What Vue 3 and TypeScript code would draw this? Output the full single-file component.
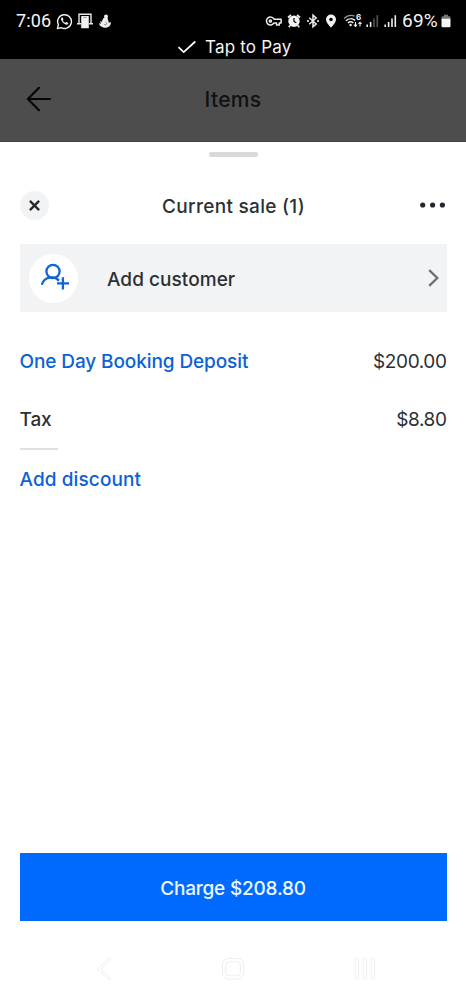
<script setup lang="ts">
interface SaleLine {
  label: string
  amount: string
  kind: 'item' | 'tax'
}

const lines: SaleLine[] = [
  { label: 'One Day Booking Deposit', amount: '$200.00', kind: 'item' },
  { label: 'Tax', amount: '$8.80', kind: 'tax' },
]
const total = '$208.80'
</script>

<template>
  <div class="screen">
    <header class="status">
      <div class="status-row">
        <span class="time">7:06</span>
        <svg class="whatsapp" width="17" height="17" viewBox="0 0 17 17" fill="none">
          <path d="M1.4 15.6l1-3.8A6.9 6.9 0 1 1 5.1 14.6z" stroke="#f2f2f2" stroke-width="1.4" stroke-linejoin="round" />
          <path d="M5.7 4.6c-1.3 1.1-.6 3 1.2 5 2 2 4 2.8 5.1 1.4.5-.7.4-1-.2-1.3l-1.2-.6c-.5-.2-.7.8-1.2.7-1-.3-2.2-1.5-2.5-2.4-.1-.4.7-.7.5-1.2l-.5-1.3c-.2-.5-.8-.6-1.2-.3z" fill="#f2f2f2" />
        </svg>
        <svg class="device" width="16" height="16" viewBox="0 0 16 16" fill="none">
          <path d="M2 10V1.3h12V10" stroke="#e8e8e8" stroke-width="1.4" />
          <path d="M0 10.8h4M12 10.8h4" stroke="#e8e8e8" stroke-width="1.6" />
          <rect x="4.2" y="3" width="7.6" height="12.3" rx=".6" fill="#f2f2f2" />
          <path d="M6.5 4.4h3" stroke="#777" stroke-width=".8" />
        </svg>
        <svg class="figure" width="12" height="15" viewBox="0 0 12 15">
          <circle cx="7" cy="2.6" r="2" fill="#eee" />
          <path d="M5.8 3.8l3 .2c-.4 1.8.8 2.6 1 4.7l1.9-.6c.7 2.5-1.7 5.6-4.7 5.6C3.3 13.7.2 12 .1 9.2l1.9.6-.9-2.6 2 .5c-.2-1.3.2-1.9 1-2.4-.4-.7 0-1.2 1.7-1.5z" fill="#eee" />
          <path d="M6.5 8.2l1.6 1-1.4 1.9-1.8-.8" fill="none" stroke="#555" stroke-width=".6" />
        </svg>
        <div class="indicators">
          <svg class="key" width="17" height="16" viewBox="0 0 17 16" fill="none" stroke="#eee" stroke-width="1.5">
            <path d="M9 6.2a4 4 0 1 0 0 3.7h2.5v2h2.8v-2h1.8V6.2z" stroke-linejoin="round" />
            <circle cx="5.4" cy="8" r="1.1" />
          </svg>
          <svg class="alarm" width="14" height="16" viewBox="0 0 14 16">
            <path d="M1 4.5L4 2M13 4.5L10 2M3 12.5l-1.2 1.6M11 12.5l1.2 1.6" stroke="#eee" stroke-width="1.8" />
            <circle cx="7" cy="8.3" r="5.7" fill="#f2f2f2" />
            <path d="M7 5v3.5l2.3 1.2" fill="none" stroke="#000" stroke-width="1.2" />
          </svg>
          <svg class="bluetooth" width="14" height="16" viewBox="0 0 14 16">
            <path d="M3.2 4.8l7 6.2L7 13.8V2.2L10.2 5l-7 6.2" fill="none" stroke="#eee" stroke-width="1.5" />
            <circle cx="2" cy="8" r="1.1" fill="#eee" /><circle cx="12" cy="8" r="1.1" fill="#eee" />
          </svg>
          <svg class="pin" width="12" height="16" viewBox="0 0 12 16">
            <path fill-rule="evenodd" d="M6 1.5a5 5 0 0 0-5 5C1 9.700 6 14.700 6 14.700s5-5 5-8.200A5 5 0 0 0 6 1.500zm0 3.200a1.800 1.800 0 1 1 0 3.600 1.800 1.800 0 0 1 0-3.600z" fill="#f2f2f2" />
          </svg>
          <span class="wifi">
            <svg width="20" height="16" viewBox="0 0 20 16" fill="none">
              <path d="M1 5.5C4.2 2.3 8.2 1.9 11.5 3.2" stroke="#999" stroke-width="1.3" />
              <path d="M2.9 7.7c2.7-2.4 6.5-2.5 9.2-.3M4.9 10c1.6-1.4 3.8-1.4 5.4 0" stroke="#eee" stroke-width="1.4" />
              <circle cx="7.6" cy="12" r="1.2" fill="#eee" />
              <path d="M12.5 9v4M10.9 11.7l1.6 1.7 1.6-1.7M17 13.5v-4M15.4 10.8L17 9.2l1.6 1.6" stroke="#eee" stroke-width="1.1" />
            </svg>
            <span class="wifi-gen">6</span>
          </span>
          <svg class="signal" width="13" height="16" viewBox="0 0 13 16" stroke-width="1.6">
            <path d="M1.2 11.5V14M4.6 9v5" stroke="#eee" />
            <path d="M8 5.5V14M11.3 2.2V14" stroke="#555" />
          </svg>
          <svg class="signal second" width="13" height="16" viewBox="0 0 13 16" stroke-width="1.6">
            <path d="M1.2 11.5V14M4.6 9v5M8 5.5V14M11.3 2.2V14" stroke="#eee" />
          </svg>
          <span class="percent">69%</span>
          <svg class="battery" width="10" height="16" viewBox="0 0 10 16">
            <path d="M3 1.7h4v1.5h1.2q1.3 0 1.3 1.3V6H.5V4.5q0-1.3 1.3-1.3H3z" fill="#777" />
            <path d="M.5 5.8h9V13q0 1.300-1.300 1.300H1.800Q.5 14.300.5 13z" fill="#f5f5f5" />
          </svg>
        </div>
      </div>
      <div class="tap">
        <svg width="20" height="14" viewBox="0 0 20 14"><path d="M1.5 7.2l5.2 4.9L18.3 1.5" fill="none" stroke="#fff" stroke-width="1.7" /></svg>
        <span>Tap to Pay</span>
      </div>
    </header>

    <div class="backdrop">
      <svg class="back" width="26" height="26" viewBox="0 0 26 26" fill="none" stroke="#060606" stroke-width="2.2" stroke-linecap="round" stroke-linejoin="round">
        <path d="M24 13H1.8M13 1.8L1.8 13 13 24.2" />
      </svg>
      <h1>Items</h1>
      <span></span>
    </div>

    <main class="sheet">
      <div class="handle"></div>
      <div class="sheet-head">
        <button class="close" aria-label="Close">
          <svg width="11" height="11" viewBox="0 0 10 10"><path d="M.8.8l8.4 8.4M9.2.8L.8 9.2" stroke="#23292e" stroke-width="2.1" /></svg>
        </button>
        <h2>Current sale (1)</h2>
        <svg class="more" width="26" height="6" viewBox="0 0 26 6" fill="#23292e">
          <circle cx="2.7" cy="3" r="2.6" /><circle cx="12.6" cy="3" r="2.6" /><circle cx="22.4" cy="3" r="2.6" />
        </svg>
      </div>

      <button class="customer">
        <span class="avatar">
          <svg width="30" height="30" viewBox="0 0 30 30" fill="none" stroke="#0f62d8" stroke-width="2.3">
            <circle cx="14" cy="8.4" r="6.6" />
            <path d="M2.8 21.8C5 13.6 15 12.4 20 17.6M18 20.300h12M23.900 14.300v12.200" />
          </svg>
        </span>
        <span class="customer-label">Add customer</span>
        <svg class="chevron" width="11" height="18" viewBox="0 0 11 18"><path d="M1.2 1.2L9.3 9l-8.100 7.800" fill="none" stroke="#6c6f73" stroke-width="2.3" /></svg>
      </button>

      <div class="lines">
        <div v-for="line in lines" :key="line.label" class="line" :class="line.kind">
          <span class="label">{{ line.label }}</span>
          <span class="amount">{{ line.amount }}</span>
        </div>
      </div>
      <div class="rule"></div>
      <a class="discount">Add discount</a>
      <button class="charge">Charge {{ total }}</button>

      <nav class="nav">
        <svg width="16" height="24" viewBox="0 0 16 24"><path d="M13 1L1.5 12 13 23l1.5-1.6L5 12l9.5-9.4z" /></svg>
        <svg width="24" height="24" viewBox="0 0 24 24"><rect x="1.5" y="1.5" width="21" height="20.5" rx="6" /><rect x="4.7" y="4.7" width="14.6" height="14.1" rx="3.5" /></svg>
        <svg width="22" height="24" viewBox="0 0 22 24"><rect x="1" y="1.5" width="3.5" height="20.5" rx="1" /><rect x="9" y="1.5" width="3.5" height="20.5" rx="1" /><rect x="17" y="1.5" width="3.5" height="20.5" rx="1" /></svg>
      </nav>
    </main>
  </div>
</template>

<style>
body { margin: 0; background: #fff; }
</style>

<style scoped>
.screen {
  width: 466px;
  height: 999px;
  display: flex;
  flex-direction: column;
  overflow: hidden;
  font-family: Inter, "Liberation Sans", sans-serif;
  color: #2b3035;
  background: #fff;
}
svg { display: block; flex: none; }
button { border: 0; padding: 0; font: inherit; color: inherit; }
h1, h2 { margin: 0; font-size: 19px; font-weight: 500; line-height: 24px; white-space: nowrap; }
.status { height: 59px; flex: none; background: #000; color: #f5f5f5; }
.status-row { height: 16px; padding: 13px 15px 0 16px; display: flex; align-items: center; }
.time { width: 40px; font-family: Roboto, sans-serif; font-size: 18px; line-height: 16px; letter-spacing: .1px; }
.device { margin-left: 4px; }
.figure { margin-left: 6px; }
.indicators { margin-left: auto; display: flex; align-items: center; }
.alarm { margin-left: 5px; }
.bluetooth { margin-left: 5px; }
.pin { margin-left: 5px; }
.wifi { position: relative; margin-left: 6px; }
.wifi-gen { position: absolute; left: 13px; top: 0; font-size: 8px; font-weight: 700; line-height: 9px; }
.signal { margin-left: 3px; }
.second { margin-left: 5px; }
.percent { width: 38px; margin-left: 5px; font-family: Roboto, sans-serif; font-size: 19px; line-height: 16px; letter-spacing: .2px; }
.battery { margin-left: 1px; }
.tap { height: 24px; padding: 6px 0 0 177px; display: flex; align-items: center; gap: 8px; font-size: 17px; line-height: 24px; letter-spacing: .2px; }
.backdrop {
  height: 83px;
  flex: none;
  box-sizing: border-box;
  padding: 0 26px 3px;
  display: grid;
  grid-template-columns: 1fr auto 1fr;
  align-items: center;
  background: #4d4d4d;
  border-bottom: 1px solid #424242;
  color: #101112;
}
.backdrop h1 { padding-top: 2px; font-size: 21px; letter-spacing: .3px; }
.sheet { flex: 1; padding: 10px 19.5px 0; display: flex; flex-direction: column; }
.handle { width: 49px; height: 5px; align-self: center; border-radius: 2px; background: #d8d9d9; }
.sheet-head { height: 30px; margin-top: 33px; display: grid; grid-template-columns: 1fr auto 1fr; align-items: center; }
.sheet-head h2 { padding: 3px 0 0 1px; letter-spacing: .3px; }
.close { width: 29px; height: 29px; border-radius: 50%; background: #f1f3f5; display: grid; place-items: center; }
.more { justify-self: end; margin-right: 1px; }
.customer { height: 68px; flex: none; margin-top: 24px; padding: 0 8px 0 9.5px; display: flex; align-items: center; background: #f1f3f5; }
.avatar { width: 49px; height: 49px; border-radius: 50%; background: #fff; display: grid; place-items: center; }
.customer-label { margin-left: 29px; padding-top: 2px; font-size: 19px; font-weight: 500; letter-spacing: .05px; }
.chevron { margin-left: auto; }
.lines { margin-top: 38px; display: flex; flex-direction: column; gap: 34px; }
.line { display: flex; justify-content: space-between; font-size: 19px; line-height: 24px; }
.label { font-weight: 500; letter-spacing: -.1px; }
.amount { letter-spacing: -.4px; }
.item .label, .discount { color: #0b62d5; }
.rule { width: 38.5px; height: 2px; flex: none; margin-top: 16px; background: #dfe1e1; }
.discount { margin-top: 18px; font-size: 19px; font-weight: 500; line-height: 24px; letter-spacing: .1px; align-self: flex-start; }
.charge { height: 68px; flex: none; margin-top: 361px; padding-top: 2px; background: #006aff; color: #f0f8ff; font-size: 19px; font-weight: 500; letter-spacing: -.2px; }
.nav { margin-top: 36px; padding: 0 71px 0 76.5px; display: flex; justify-content: space-between; }
.nav svg { fill: none; stroke: #eeeeee; stroke-width: 1; }
</style>
